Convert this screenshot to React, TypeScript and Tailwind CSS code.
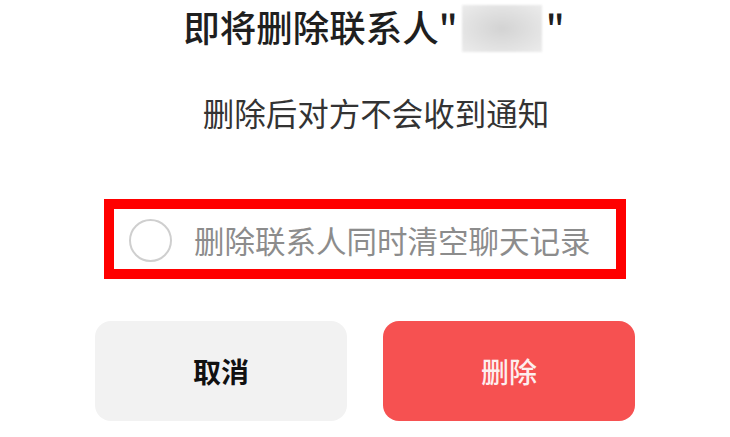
export default function App() {
  return (
    <div className="w-[730px] h-[437px] bg-white flex flex-col items-center font-['Noto_Sans_CJK_SC',sans-serif]">
      <div className="pl-[18px] flex items-start text-[36.5px] leading-[53px] font-medium text-[#1f1f1f]">
        <span>即将删除联系人"</span>
        <span className="mt-[5px] mx-[4px] w-[80px] h-[47px] bg-[radial-gradient(ellipse_at_center,#d3d3d3,#ececec)] blur-[1px]" />
        <span>"</span>
      </div>
      <p className="mt-[39px] pl-[22px] text-[31.5px] leading-[1.3] text-[#333]">
        删除后对方不会收到通知
      </p>
      <label className="mt-[66px] w-[522px] h-[80px] border-[10px] border-[#ff0000] flex items-center pt-[4px] pl-[15px] gap-[22px]">
        <span className="w-[43px] h-[43px] rounded-full border-2 border-[#cfcfcf]" />
        <span className="text-[30.5px] leading-[1.3] text-[#8c8c8c]">删除联系人同时清空聊天记录</span>
      </label>
      <div className="mt-[42px] flex gap-[36px]">
        <button className="w-[252px] h-[100px] rounded-[16px] bg-[#f2f2f2] text-[28px] font-bold text-[#111]">
          取消
        </button>
        <button className="w-[252px] h-[100px] rounded-[16px] bg-[#f65151] text-[28px] font-medium text-[#fdeeee]">
          删除
        </button>
      </div>
    </div>
  );
}
